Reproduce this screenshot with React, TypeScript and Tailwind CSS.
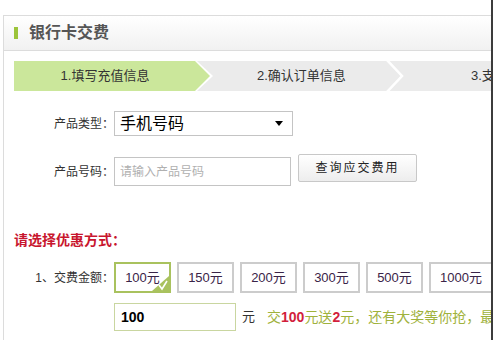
import { useState } from "react";

const amounts = ["100元", "150元", "200元", "300元", "500元", "1000元"];

const font = "[font-family:'Liberation_Sans','Noto_Sans_CJK_SC',sans-serif]";

const App = () => {
  const [picked, setPicked] = useState(0);
  const [money, setMoney] = useState("100");

  return (
    <div
      className={`w-[493px] h-[340px] overflow-hidden bg-white border-r-2 border-[#3c3c3c] pt-[15px] pl-[3px] ${font}`}
    >
      <div className="h-full border-l border-t border-[#dcdcdc] overflow-hidden">
        {/* header */}
        <div className="h-[35px] flex items-center border-b border-[#dcdcdc] bg-gradient-to-b from-white to-[#f1f1f1]">
          <span className="ml-[10px] w-[4px] h-[12px] bg-[#9cc43a]" />
          <span className="ml-[11px] text-[16px] font-bold text-[#555]">
            银行卡交费
          </span>
        </div>

        {/* steps */}
        <div className="mt-[10px] ml-[10px] h-[30px] flex bg-[#ebebeb] text-[13px] text-[#333]">
          <div className="shrink-0 w-[199px] h-full bg-white [clip-path:polygon(0_0,183px_0,199px_50%,183px_100%,0_100%)]">
            <div className="w-[196px] h-full flex items-center justify-center pr-[14px] bg-[#cbe79b] [clip-path:polygon(0_0,181px_0,196px_50%,181px_100%,0_100%)]">
              1.填写充值信息
            </div>
          </div>
          <div className="shrink-0 w-[172px] flex items-center pl-[44px]">2.确认订单信息</div>
          <svg width="20" height="30" viewBox="0 0 20 30" className="shrink-0">
            <polyline points="1,-2 17,15 1,32" fill="none" stroke="#fff" strokeWidth="2.5" />
          </svg>
          <div className="shrink-0 flex items-center pl-[66px] whitespace-nowrap">3.支付</div>
        </div>

        {/* product type */}
        <div className="mt-[20px] flex items-center h-[25px]">
          <label className="shrink-0 w-[110px] text-right text-[12px] text-[#333]">产品类型：</label>
          <div className="shrink-0 w-[179px] h-[25px] border border-[#c4c4c4] flex items-center justify-between pl-[5px] pr-[9px]">
            <span className="text-[16px] text-black">手机号码</span>
            <span className="w-0 h-0 border-l-[4px] border-r-[4px] border-t-[5px] border-l-transparent border-r-transparent border-t-black" />
          </div>
        </div>

        {/* product number */}
        <div className="mt-[18px] flex items-start">
          <label className="shrink-0 w-[110px] mt-[3px] h-[29px] flex items-center justify-end text-[12px] text-[#333]">
            产品号码：
          </label>
          <input
            className="shrink-0 mt-[3px] w-[177px] h-[29px] border border-[#c4c4c4] px-[5px] text-[12px] outline-none placeholder:text-[#b0b0b0]"
            placeholder="请输入产品号码"
          />
          <button className="shrink-0 ml-[7px] w-[119px] h-[28px] border border-[#c8c8c8] rounded-[2px] bg-gradient-to-b from-white to-[#ededed] text-[12px] tracking-[2px] text-[#222]">
            查询应交费用
          </button>
        </div>

        {/* discount */}
        <div className="mt-[44px] ml-[10px] h-[20px] flex items-center text-[14px] font-bold text-[#c8162e]">
          请选择优惠方式：
        </div>

        <div className="mt-[12px] flex items-center">
          <label className="shrink-0 w-[110px] text-right text-[12px] text-[#333]">1、交费金额：</label>
          <div className="flex gap-[6px] shrink-0">
            {amounts.map((a, i) => (
              <button
                key={a}
                onClick={() => {
                  setPicked(i);
                  setMoney(a.replace("元", ""));
                }}
                className={`relative shrink-0 h-[31px] border-2 text-[13px] text-[#3a2448] ${
                  i === 5 ? "w-[64px]" : "w-[57px]"
                } ${picked === i ? "border-[#a9c25e]" : "border-[#cccccc]"}`}
              >
                {a}
                {picked === i && (
                  <svg width="17" height="15" viewBox="0 0 17 15" className="absolute right-0 bottom-0">
                    <polygon points="17,0 17,15 0,15" fill="#a9c25e" />
                    <polyline points="7,9 10,13 15,5" fill="none" stroke="#fff" strokeWidth="1.6" />
                  </svg>
                )}
              </button>
            ))}
          </div>
        </div>

        <div className="mt-[10px] flex items-center">
          <div className="shrink-0 w-[110px]" />
          <input
            value={money}
            onChange={(e) => setMoney(e.target.value)}
            className="shrink-0 w-[122px] h-[28px] border border-[#c9d6a0] px-[6px] text-[14px] font-bold text-black outline-none"
          />
          <span className="shrink-0 ml-[6px] text-[13px] text-[#333]">元</span>
          <span className="shrink-0 ml-[12px] text-[14px] text-[#9fb23c] whitespace-nowrap">
            交<b className="text-[#d21f3c]">100</b>元送<b className="text-[#d21f3c]">2</b>元，还有大奖等你抢，最高可得
          </span>
        </div>
      </div>
    </div>
  );
};

export default App;
